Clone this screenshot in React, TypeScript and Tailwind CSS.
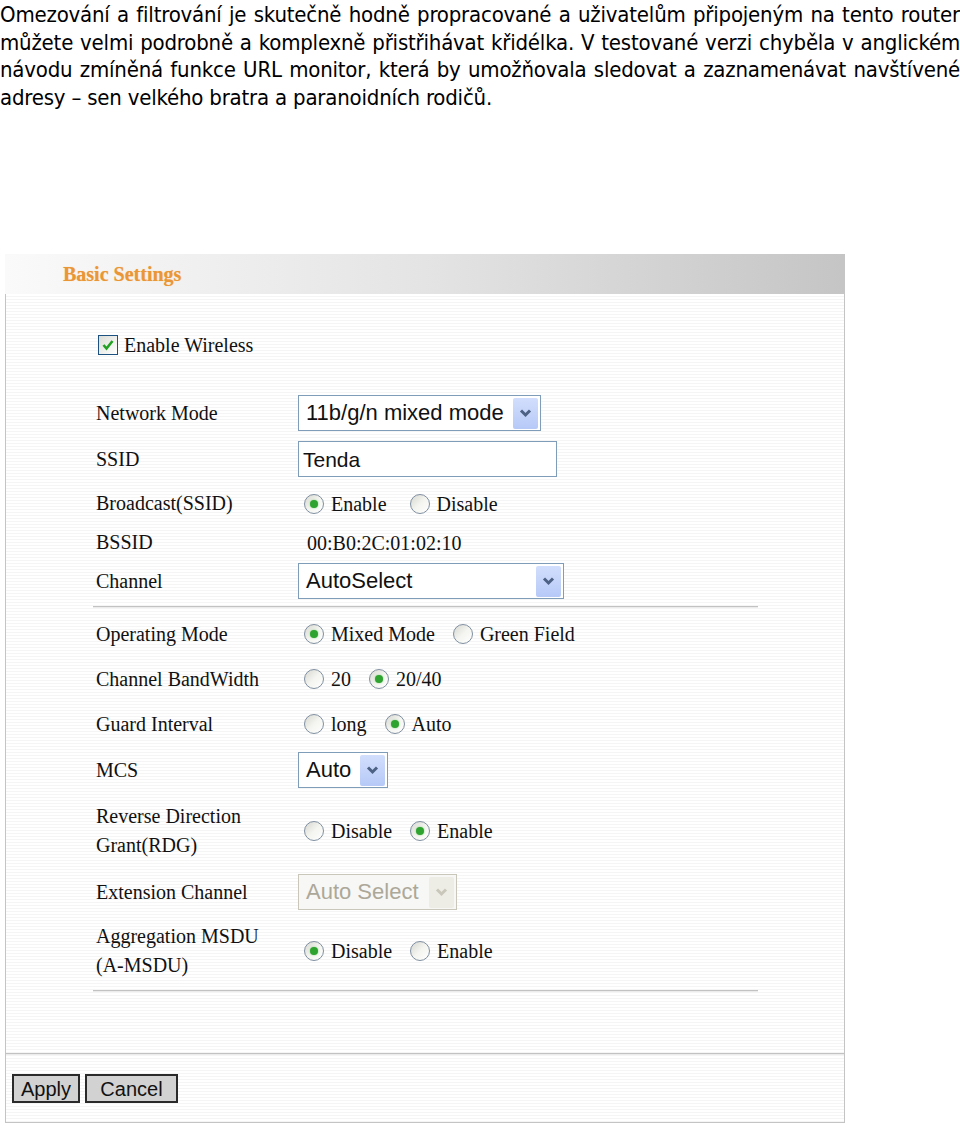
import React from "react";

const lines = [
  "Omezování a filtrování je skutečně hodně propracované a uživatelům připojeným na tento router",
  "můžete velmi podrobně a komplexně přistřihávat křidélka. V testované verzi chyběla v anglickém",
  "návodu zmíněná funkce URL monitor, která by umožňovala sledovat a zaznamenávat navštívené",
  "adresy – sen velkého bratra a paranoidních rodičů.",
];

const serif = "font-['Liberation_Serif',serif]";
const sans = "font-['Liberation_Sans',Arial,sans-serif]";

function Chevron({ disabled }: { disabled?: boolean }) {
  return (
    <svg width="13" height="10" viewBox="0 0 13 10">
      <path
        d="M2 2.5 L6.5 7 L11 2.5"
        fill="none"
        stroke={disabled ? "#c9c7ba" : "#4d6185"}
        strokeWidth="3"
      />
    </svg>
  );
}

function Select({ value, width, disabled }: { value: string; width: string; disabled?: boolean }) {
  return (
    <div
      className={`flex h-[36px] items-center justify-between border pl-[7px] pr-[2px] ${width} ${
        disabled ? "border-[#c9c7ba] bg-[#f7f7f5] text-[#aca899]" : "border-[#7f9db9] bg-white text-[#111]"
      }`}
    >
      <span className={`${sans} text-[22px] leading-none`}>{value}</span>
      <span
        className={`flex h-[31px] w-[25px] items-center justify-center rounded-[2px] ${
          disabled ? "bg-[#eeede5]" : "bg-gradient-to-b from-[#d2defc] to-[#b6c9f7]"
        }`}
      >
        <Chevron disabled={disabled} />
      </span>
    </div>
  );
}

function Radio({ checked }: { checked?: boolean }) {
  return (
    <span className="flex h-[20px] w-[20px] shrink-0 items-center justify-center rounded-full border border-[#7f8fa0] bg-gradient-to-br from-[#d8d8d2] via-[#f4f4f0] to-white">
      {checked && <span className="h-[8px] w-[8px] rounded-full bg-[#2fa32f] shadow-[0_0_2px_#7ccf7c]" />}
    </span>
  );
}

function Radios({ items, checked, gap = "gap-[18px]" }: { items: string[]; checked: number; gap?: string }) {
  return (
    <div className={`ml-[6px] flex items-center ${gap}`}>
      {items.map((it, i) => (
        <label key={it} className="flex items-center gap-[7px]">
          <Radio checked={i === checked} />
          <span className={`${serif} text-[20px] leading-none text-[#111]`}>{it}</span>
        </label>
      ))}
    </div>
  );
}

function Row({ label, h, children }: { label: React.ReactNode; h: string; children: React.ReactNode }) {
  return (
    <div className={`flex items-center ${h}`}>
      <div className={`w-[205px] shrink-0 pl-[3px] ${serif} text-[20px] leading-[29px] text-[#111]`}>{label}</div>
      {children}
    </div>
  );
}

export default function App() {
  return (
    <div className="w-[960px] bg-white">
      <div className="pt-[1px] font-['DejaVu_Sans_Condensed','DejaVu_Sans',sans-serif] text-[22px] leading-[27.5px] tracking-[-0.2px] text-black">
        {lines.map((l, i) => (
          <div
            key={i}
            className={`whitespace-nowrap ${i < lines.length - 1 ? "text-justify [text-align-last:justify]" : ""}`}
          >
            {l}
          </div>
        ))}
      </div>

      <div className="ml-[5px] mt-[143px] w-[840px]">
        <div className="flex h-[40px] items-center bg-gradient-to-r from-[#fafafa] via-[#e4e4e4] to-[#c5c5c5] pl-[58px]">
          <span className={`${serif} text-[20px] font-bold text-[#ea9636] [text-shadow:0_0_1px_#f5c690]`}>
            Basic Settings
          </span>
        </div>

        <div className="border-x border-b border-[#c4c4c4] bg-[repeating-linear-gradient(to_bottom,#ffffff_0px,#ffffff_2px,#f5f5f5_2px,#f5f5f5_3px)]">
          <div className="pl-[87px] pt-[40px]">
            <div className="flex h-[22px] items-center gap-[6px] pl-[5px]">
              <span className="flex h-[20px] w-[20px] items-center justify-center border border-[#1c5180] bg-gradient-to-br from-[#dcdcd7] to-white">
                <svg width="14" height="14" viewBox="0 0 14 14">
                  <path d="M2.5 7 L5.5 10.5 L11.5 3" fill="none" stroke="#21a121" strokeWidth="2.6" />
                </svg>
              </span>
              <span className={`${serif} text-[20px] leading-none text-[#111]`}>Enable Wireless</span>
            </div>

            <div className="mt-[34px] w-[665px]">
              <Row label="Network Mode" h="h-[46px]">
                <Select value="11b/g/n mixed mode" width="w-[243px]" />
              </Row>
              <Row label="SSID" h="h-[46px]">
                <div className="flex h-[36px] w-[259px] items-center border border-[#7f9db9] bg-white pl-[4px]">
                  <span className={`${sans} text-[21px] leading-none text-[#111]`}>Tenda</span>
                </div>
              </Row>
              <Row label="Broadcast(SSID)" h="h-[43px]">
                <Radios items={["Enable", "Disable"]} checked={0} gap="gap-[23px]" />
              </Row>
              <Row label="BSSID" h="h-[35px]">
                <span className={`ml-[9px] ${serif} text-[20px] leading-none text-[#111]`}>00:B0:2C:01:02:10</span>
              </Row>
              <Row label="Channel" h="h-[42px]">
                <Select value="AutoSelect" width="w-[266px]" />
              </Row>
              <div className="mt-[4px] h-[2px] border-t border-[#c2c2c2] bg-[#ececec]" />

              <Row label="Operating Mode" h="h-[52px]">
                <Radios items={["Mixed Mode", "Green Field"]} checked={0} />
              </Row>
              <Row label="Channel BandWidth" h="h-[38px]">
                <Radios items={["20", "20/40"]} checked={1} />
              </Row>
              <Row label="Guard Interval" h="h-[52px]">
                <Radios items={["long", "Auto"]} checked={1} />
              </Row>
              <Row label="MCS" h="h-[40px]">
                <Select value="Auto" width="w-[90px]" />
              </Row>
              <Row
                label={
                  <>
                    Reverse Direction
                    <br />
                    Grant(RDG)
                  </>
                }
                h="h-[82px]"
              >
                <Radios items={["Disable", "Enable"]} checked={1} />
              </Row>
              <Row label="Extension Channel" h="h-[40px]">
                <Select value="Auto Select" width="w-[159px]" disabled />
              </Row>
              <Row
                label={
                  <>
                    Aggregation MSDU
                    <br />
                    (A-MSDU)
                  </>
                }
                h="h-[78px]"
              >
                <Radios items={["Disable", "Enable"]} checked={0} />
              </Row>
              <div className="h-[2px] border-t border-[#c2c2c2] bg-[#ececec]" />
            </div>
          </div>

          <div className="mt-[61px] h-[2px] border-t border-[#c2c2c2] bg-[#ececec]" />

          <div className="flex gap-[5px] pb-[19px] pl-[6px] pt-[19px]">
            <button className={`flex h-[29px] w-[68px] items-center justify-center border-2 border-[#2a2a2a] bg-[#d2d2d2] ${sans} text-[20px] leading-none text-[#111]`}>
              Apply
            </button>
            <button className={`flex h-[29px] w-[93px] items-center justify-center border-2 border-[#2a2a2a] bg-[#d2d2d2] ${sans} text-[20px] leading-none text-[#111]`}>
              Cancel
            </button>
          </div>
        </div>
      </div>
    </div>
  );
}
